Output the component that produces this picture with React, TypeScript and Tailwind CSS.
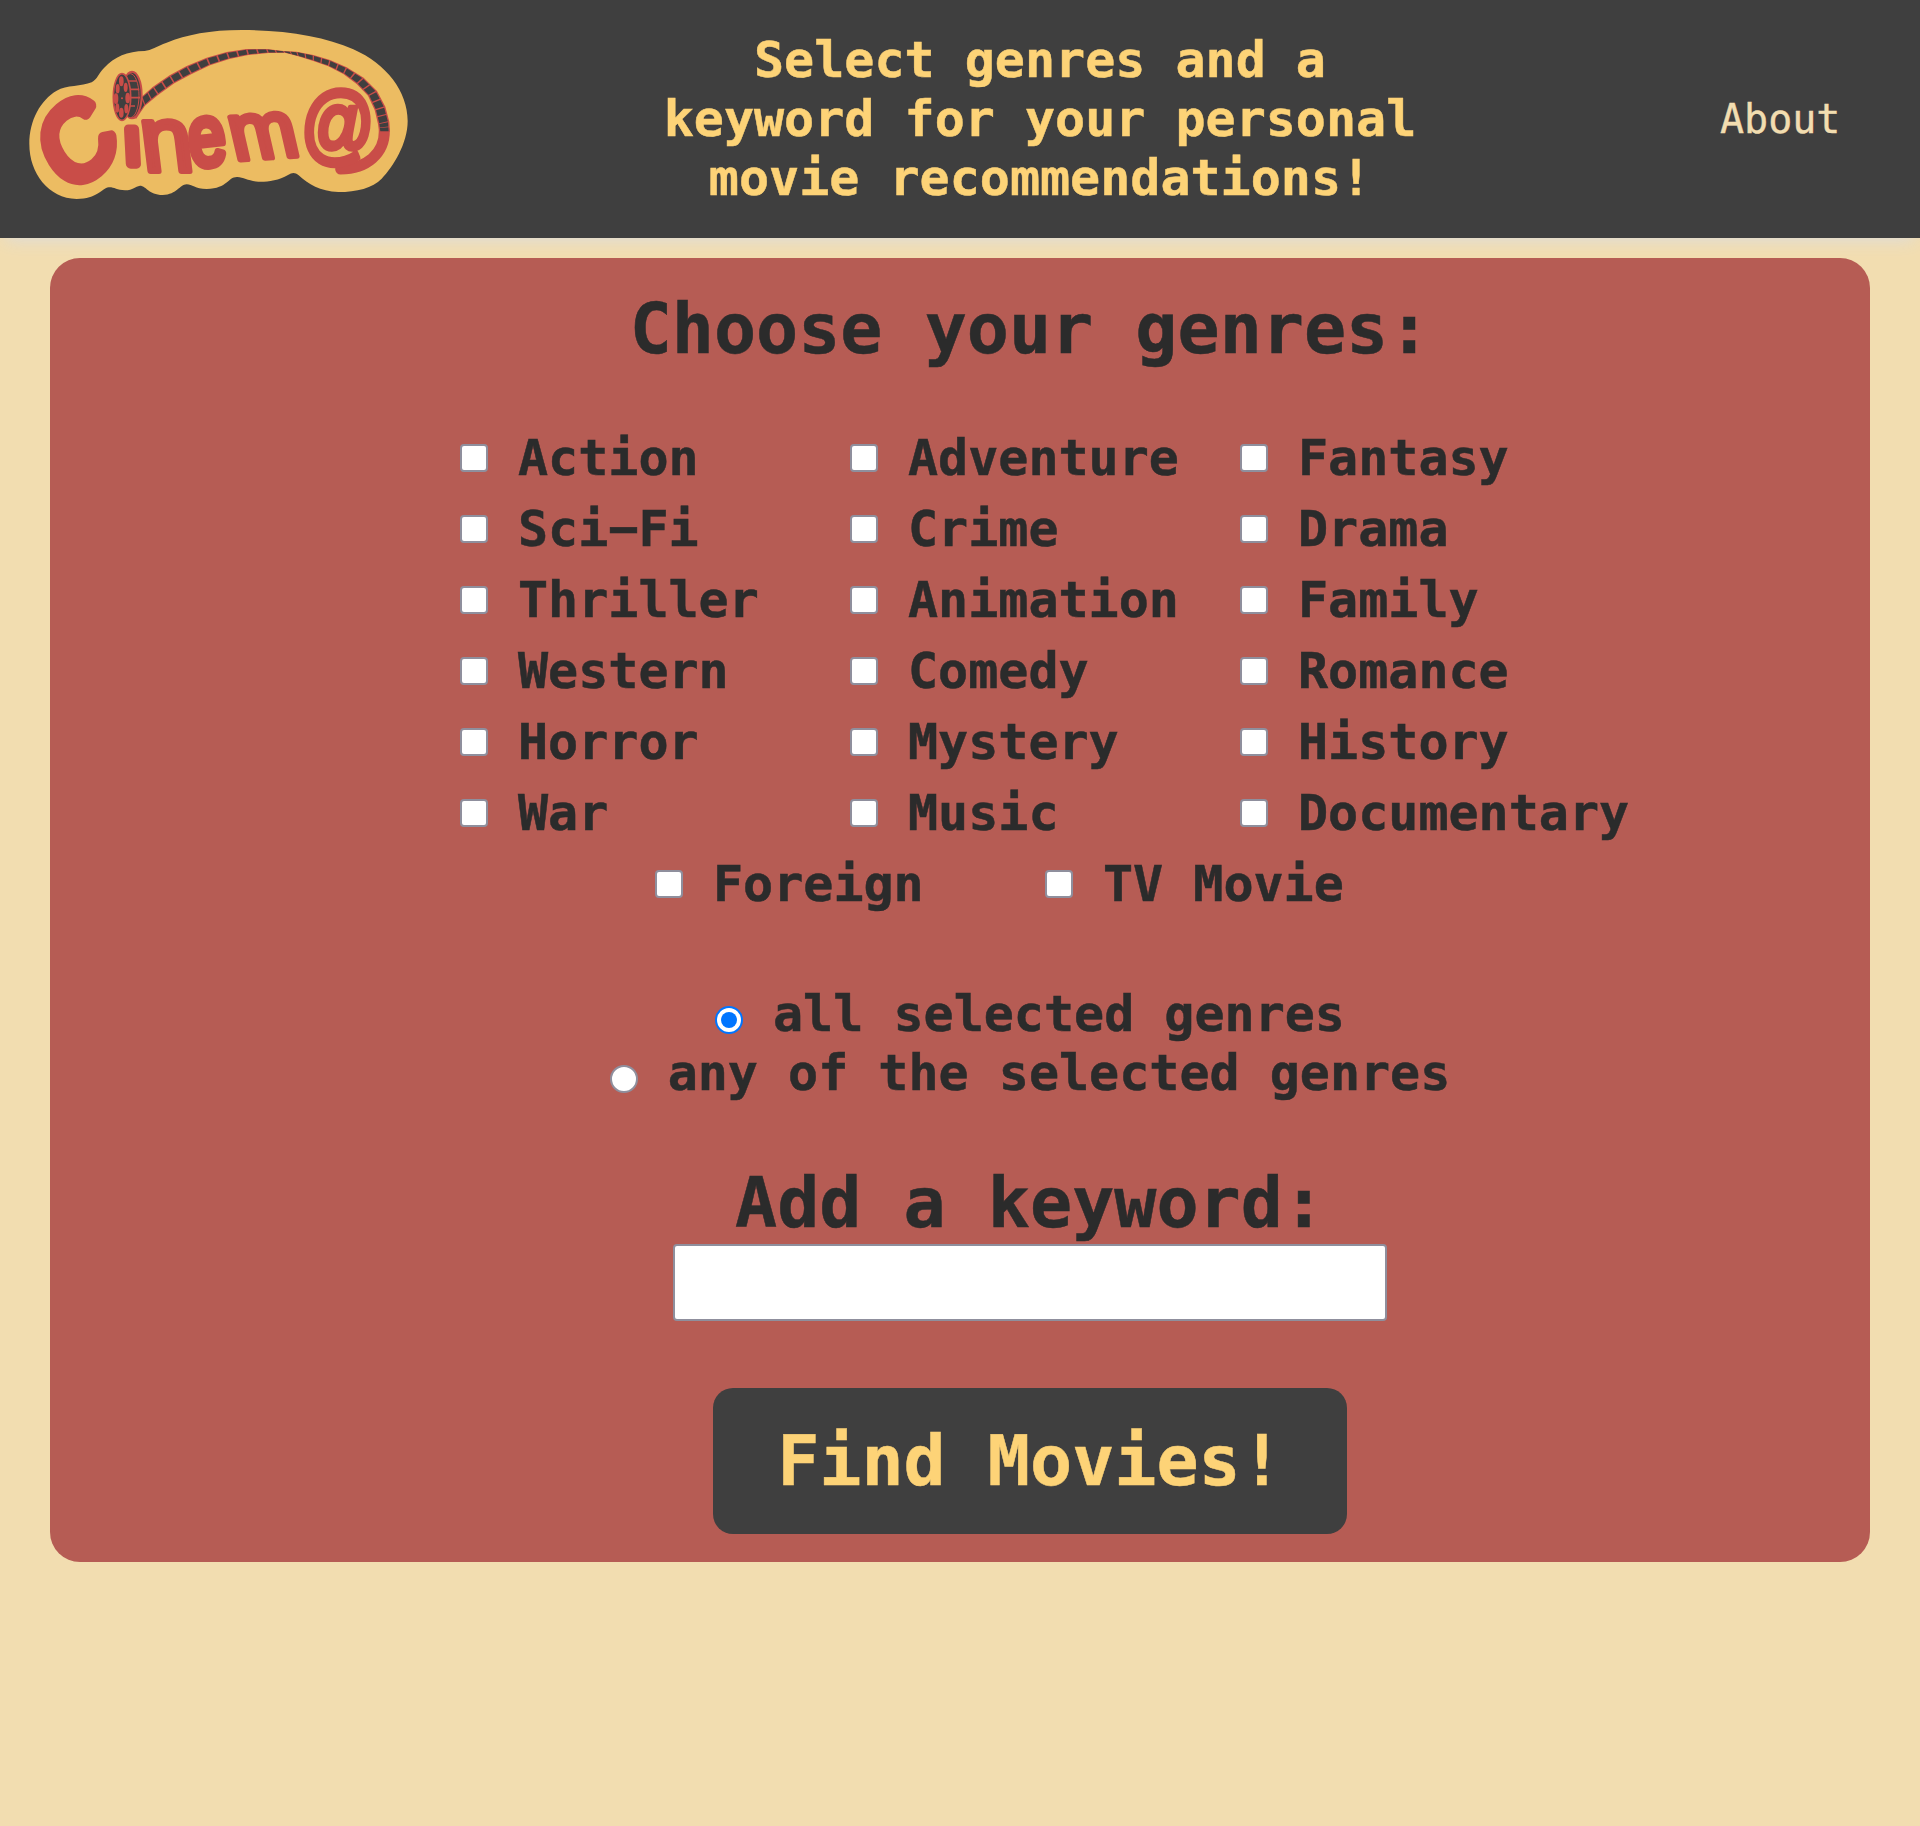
import React from "react";

type Pt = [number, number];

const GENRES = [
  "Action", "Adventure", "Fantasy",
  "Sci−Fi", "Crime", "Drama",
  "Thriller", "Animation", "Family",
  "Western", "Comedy", "Romance",
  "Horror", "Mystery", "History",
  "War", "Music", "Documentary",
  "Foreign", "TV Movie",
];

// Both edges of the film strip, from the reel to the tail of the @ sign.
const UPPER: Pt[] = [[328, 270], [365, 230], [399, 200], [449, 166], [500, 138], [560, 113], [620, 96], [680, 87], [740, 87], [790, 93], [830, 95], [880, 105], [930, 120], [980, 142], [1031, 173], [1071, 213], [1096, 260], [1108, 305], [1110, 335]];
const LOWER: Pt[] = [[348, 297], [375, 257], [415, 224], [463, 190], [515, 162], [570, 136], [628, 117], [685, 105], [745, 99], [795, 98], [835, 109], [880, 123], [925, 139], [970, 162], [1010, 192], [1044, 227], [1064, 270], [1074, 312], [1077, 335]];

const mix = (a: Pt, b: Pt, t: number): Pt => [a[0] + (b[0] - a[0]) * t, a[1] + (b[1] - a[1]) * t];

function at(edge: Pt[], t: number): Pt {
  const i = Math.min(Math.floor(t), edge.length - 2);
  return mix(edge[i], edge[i + 1], t - i);
}

function frames(): string[] {
  const out: string[] = [];
  const step = 0.5;
  for (let t = 0; t < 17.9; t += step) {
    const a = t + 0.04;
    const b = t + step - 0.04;
    const ua = at(UPPER, a), ub = at(UPPER, b), la = at(LOWER, a), lb = at(LOWER, b);
    out.push([mix(ua, la, 0.12), mix(ub, lb, 0.12), mix(ub, lb, 0.88), mix(ua, la, 0.88)].map((p) => p.join(",")).join(" "));
  }
  return out;
}

function Logo() {
  const strip = [...UPPER, ...[...LOWER].reverse()].map((p) => p.join(",")).join(" ");
  return (
    <svg viewBox="0 0 1200 570" className="h-[190px] w-[400px] shrink-0 overflow-visible" aria-label="Cinem@">
      <path
        fill="#ecbc62"
        d="M215 187C232 178 236 160 252 144C284 110 322 94 374 93C394 90 410 79 440 68C500 44 570 30 665 30C800 30 915 50 1000 88C1100 132 1163 215 1163 303C1163 370 1120 440 1085 476C1058 504 1010 516 955 516C900 514 865 493 836 466C824 456 816 458 804 465C775 482 740 486 715 485C685 483 672 472 652 471C622 470 626 505 560 507C525 507 517 493 500 493C478 494 472 524 428 525C385 524 378 497 360 497C345 499 340 510 315 511C290 510 282 501 266 502C245 505 232 537 170 537C85 535 28 460 28 372C28 300 62 240 110 212C140 195 185 200 215 187Z"
      />
      <path d="M1093 332C1094 400 1040 447 962 447" fill="none" stroke="#c94d48" strokeWidth="33" strokeLinecap="round" />
      <polygon points={strip} fill="#c94d48" />
      {frames().map((f) => (
        <polygon key={f} points={f} fill="#3f3f3f" />
      ))}
      <g stroke="#c94d48" fill="#3f3f3f">
        <ellipse cx="336" cy="225" rx="29" ry="70" strokeWidth="6" />
        <ellipse cx="331" cy="227" rx="26" ry="66" strokeWidth="3" />
        <path strokeWidth="5" d="M320 183H350M325 208H358M326 233H360M322 258H345" />
        <ellipse cx="306" cy="231" rx="26" ry="70" strokeWidth="5" />
      </g>
      <g fill="#c94d48">
        <ellipse cx="304" cy="184" rx="7" ry="15" />
        <ellipse cx="304" cy="278" rx="7" ry="15" />
        <ellipse cx="288" cy="236" rx="7" ry="16" />
        <ellipse cx="323" cy="234" rx="7" ry="16" />
        <ellipse cx="293" cy="206" rx="6" ry="14" />
        <ellipse cx="317" cy="202" rx="6" ry="14" />
        <ellipse cx="292" cy="264" rx="6" ry="14" />
        <ellipse cx="319" cy="266" rx="6" ry="14" />
        <circle cx="306" cy="235" r="3" />
      </g>
      <g fill="#c94d48" stroke="#c94d48" strokeLinejoin="round" fontFamily="Liberation Sans, sans-serif">
        <text transform="translate(171 362) scale(.93 1.07) rotate(-36) translate(-112 107)" fontSize="304" strokeWidth="34">C</text>
        <text transform="translate(313 432) skewX(3)" fontSize="198" strokeWidth="28">ı</text>
        <text transform="translate(372 452) skewX(7)" fontSize="278" strokeWidth="18">n</text>
        <text transform="translate(514 440) rotate(-6) scale(.77 1)" fontSize="258" strokeWidth="25">e</text>
        <text transform="translate(644 420) rotate(-4) skewX(9)" fontSize="242" strokeWidth="18">m</text>
        <text transform="translate(843 399) scale(.84 1)" fontSize="259" strokeWidth="17">@</text>
      </g>
    </svg>
  );
}

const box = "block size-7 shrink-0 border-2 border-[#8f8f9d] bg-white";

export default function App() {
  return (
    <div className="min-h-[1826px] bg-[#f2ddb0] font-['DejaVu_Sans_Mono',monospace] text-[#2b2b2b]">
      <header className="flex h-[238px] items-start bg-[#3f3f3f] pt-5 pl-5 shadow-[0_8px_16px_-6px_#dcdcdc]">
        <Logo />
        <h1 className="mt-[11px] ml-[220px] w-[800px] text-center text-[50px] leading-[59px] font-bold text-[#fdd377] [-webkit-text-stroke:0.5px_#fdd377]">
          Select genres and a<br />keyword for your personal<br />movie recommendations!
        </h1>
        <a className="mt-[75px] ml-[280px] text-[40px] leading-[48px] text-[#f2ddb0] [-webkit-text-stroke:0.4px_#f2ddb0]">About</a>
      </header>
      <main className="mx-[50px] mt-5 flex h-[1304px] flex-col items-center rounded-[30px] bg-[#b65c54] pl-[140px] [-webkit-text-stroke:0.5px_#2b2b2b]">
        <h2 className="mt-[29px] text-[70px] leading-[84px] font-bold">Choose your genres:</h2>
        <div className="mt-[52px] flex w-[1170px] flex-wrap justify-center">
          {GENRES.map((g) => (
            <label key={g} className="flex h-[71px] w-[390px] items-center pl-[15px] text-[50px] leading-[59px] font-bold whitespace-nowrap">
              <span className={`${box} mb-px rounded-[4px]`} />
              <span className="ml-[30px]">{g}</span>
            </label>
          ))}
        </div>
        <div className="mt-[65px] flex flex-col items-center text-[50px] leading-[59px] font-bold">
          <label className="flex h-[59px] items-center">
            <span className="mt-[10px] flex size-7 items-center justify-center rounded-full border-2 border-[#0075ff] bg-white">
              <span className="size-4 rounded-full bg-[#0075ff]" />
            </span>
            <span className="ml-[30px]">all selected genres</span>
          </label>
          <label className="flex h-[59px] items-center">
            <span className={`${box} mt-[10px] rounded-full`} />
            <span className="ml-[30px]">any of the selected genres</span>
          </label>
        </div>
        <h2 className="mt-[58px] text-[70px] leading-[84px] font-bold">Add a keyword:</h2>
        <input className="-mt-px h-[77px] w-[714px] rounded-[4px] border-2 border-[#8f8f9d] bg-white" />
        <button className="mt-[67px] h-[146px] w-[634px] rounded-[20px] bg-[#3f3f3f] text-[70px] leading-[82px] font-bold text-[#fdd377] [-webkit-text-stroke:0.5px_#fdd377]">
          Find Movies!
        </button>
      </main>
    </div>
  );
}
